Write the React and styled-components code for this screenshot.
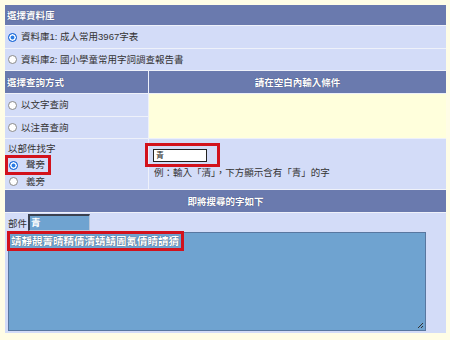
import React from 'react';
import styled, { createGlobalStyle } from 'styled-components';

const GlobalStyle = createGlobalStyle`
  body {
    margin: 0;
    background: #fffde6;
    font-family: "Liberation Sans", "Noto Sans CJK TC", sans-serif;
    font-size: 9.5px;
    color: #333;
  }
`;

const Board = styled.div`
  display: grid;
  grid-template-columns: 143px 297px;
  grid-template-rows: 20px 22px 21px 22px 22px 21px 50px 22px 120px;
  gap: 1px;
  width: 441px;
  margin: 5px 0 0 5px;
  background: #eef1fa;
`;

const Head = styled.div`
  grid-column: ${p => (p.$wide ? '1 / 3' : 'auto')};
  display: flex;
  align-items: center;
  justify-content: ${p => (p.$center ? 'center' : 'flex-start')};
  padding-left: ${p => (p.$center ? '0' : '2px')};
  background: #6a7aae;
  color: #fff;
  font-weight: bold;
  text-shadow: 0 0 1px #2a3560;
`;

const Cell = styled.div`
  grid-column: ${p => (p.$wide ? '1 / 3' : 'auto')};
  grid-row: ${p => (p.$rows ? `span ${p.$rows}` : 'auto')};
  background: ${p => (p.$yellow ? '#ffffdc' : '#d3dcf8')};
  display: flex;
  align-items: center;
  padding-left: 3px;
`;

const Option = styled.label`
  display: flex;
  align-items: center;
  gap: 4px;
  line-height: 12px;
`;

const Radio = styled.span`
  width: 7px;
  height: 7px;
  border-radius: 50%;
  border: 1px solid ${p => (p.$checked ? '#1b66d6' : '#8a8a8a')};
  background: ${p => (p.$checked ? '#2a7be4' : '#fff')};
  box-shadow: ${p => (p.$checked ? 'inset 0 0 0 1.5px #fff' : 'none')};
  flex-shrink: 0;
`;

const PartCell = styled.div`
  background: #d3dcf8;
  display: flex;
  flex-direction: column;
  padding-top: 5px;
`;

const PartTitle = styled.div`
  padding-left: 3px;
  line-height: 10px;
`;

const RadioLine = styled.div`
  display: flex;
  align-items: center;
  gap: 8px;
  width: 39px;
  height: ${p => (p.$boxed ? '14px' : '13px')};
  margin-top: ${p => (p.$boxed ? '1px' : '0')};
  padding-left: ${p => (p.$boxed ? '1px' : '4px')};
  border: ${p => (p.$boxed ? '3px solid #d2121c' : '0')};
  line-height: 12px;
`;

const InputCell = styled.div`
  background: #d3dcf8;
  display: flex;
  flex-direction: column;
  padding: 4px 0 0 5px;
`;

const RedFrame = styled.div`
  width: 64px;
  height: 18px;
  margin-left: -9px;
  border: 3px solid #d2121c;
  display: flex;
  align-items: center;
  padding-left: 5px;
  box-sizing: content-box;
`;

const TextBox = styled.div`
  width: 50px;
  height: 11px;
  border: 1px solid #222;
  background: #fff;
  font-size: 8px;
  line-height: 11px;
  padding-left: 2px;
  color: #222;
`;

const Hint = styled.div`
  margin-top: 1px;
  line-height: 10px;
`;

const ResultCell = styled.div`
  grid-column: 1 / 3;
  background: #d3dcf8;
  padding: 1px 0 0 3px;
  display: flex;
  flex-direction: column;
`;

const PartRow = styled.div`
  display: flex;
  align-items: center;
  height: 17px;
`;

const PartBox = styled.div`
  width: 58px;
  height: 14px;
  margin-left: 1px;
  background: #6fa3d0;
  border-top: 2px solid #3a4150;
  border-left: 2px solid #3a4150;
  border-right: 1px solid #b8c6dc;
  border-bottom: 1px solid #b8c6dc;
  color: #fff;
  font-weight: bold;
  line-height: 14px;
  padding-left: 1px;
`;

const Results = styled.div`
  position: relative;
  margin-top: 1px;
  width: 416px;
  height: 97px;
  background: #6fa3d0;
  border: 1px solid #5877a0;
`;

const Found = styled.span`
  display: inline-block;
  margin: -2px 0 0 -2px;
  padding: 1px 2px 1px 1px;
  border: 3px solid #d2121c;
  color: #fff;
  font-weight: bold;
  font-size: 10.5px;
  line-height: 12px;
  text-shadow: 0 0 1px #1f3655;
`;

const Grip = styled.svg`
  position: absolute;
  right: 1px;
  bottom: 1px;
`;

export default function App() {
  return (
    <>
      <GlobalStyle />
      <Board>
        <Head $wide>選擇資料庫</Head>
        <Cell $wide>
          <Option><Radio $checked />資料庫1: 成人常用3967字表</Option>
        </Cell>
        <Cell $wide>
          <Option><Radio />資料庫2: 國小學童常用字詞調查報告書</Option>
        </Cell>

        <Head>選擇查詢方式</Head>
        <Head $center>請在空白內輸入條件</Head>

        <Cell>
          <Option><Radio />以文字查詢</Option>
        </Cell>
        <Cell $yellow $rows={2} />
        <Cell>
          <Option><Radio />以注音查詢</Option>
        </Cell>

        <PartCell>
          <PartTitle>以部件找字</PartTitle>
          <RadioLine $boxed><Radio $checked />聲旁</RadioLine>
          <RadioLine><Radio />義旁</RadioLine>
        </PartCell>
        <InputCell>
          <RedFrame>
            <TextBox>青</TextBox>
          </RedFrame>
          <Hint>例：輸入「清」，下方顯示含有「青」的字</Hint>
        </InputCell>

        <Head $wide $center>即將搜尋的字如下</Head>

        <ResultCell>
          <PartRow>
            部件<PartBox>青</PartBox>
          </PartRow>
          <Results>
            <Found>靖靜靚菁晴精倩清蜻鯖圊氰倩睛請猜</Found>
            <Grip width="7" height="7" viewBox="0 0 7 7">
              <path d="M6 1 L1 6 M6 4 L4 6" stroke="#333" strokeWidth="1" />
            </Grip>
          </Results>
        </ResultCell>
      </Board>
    </>
  );
}
